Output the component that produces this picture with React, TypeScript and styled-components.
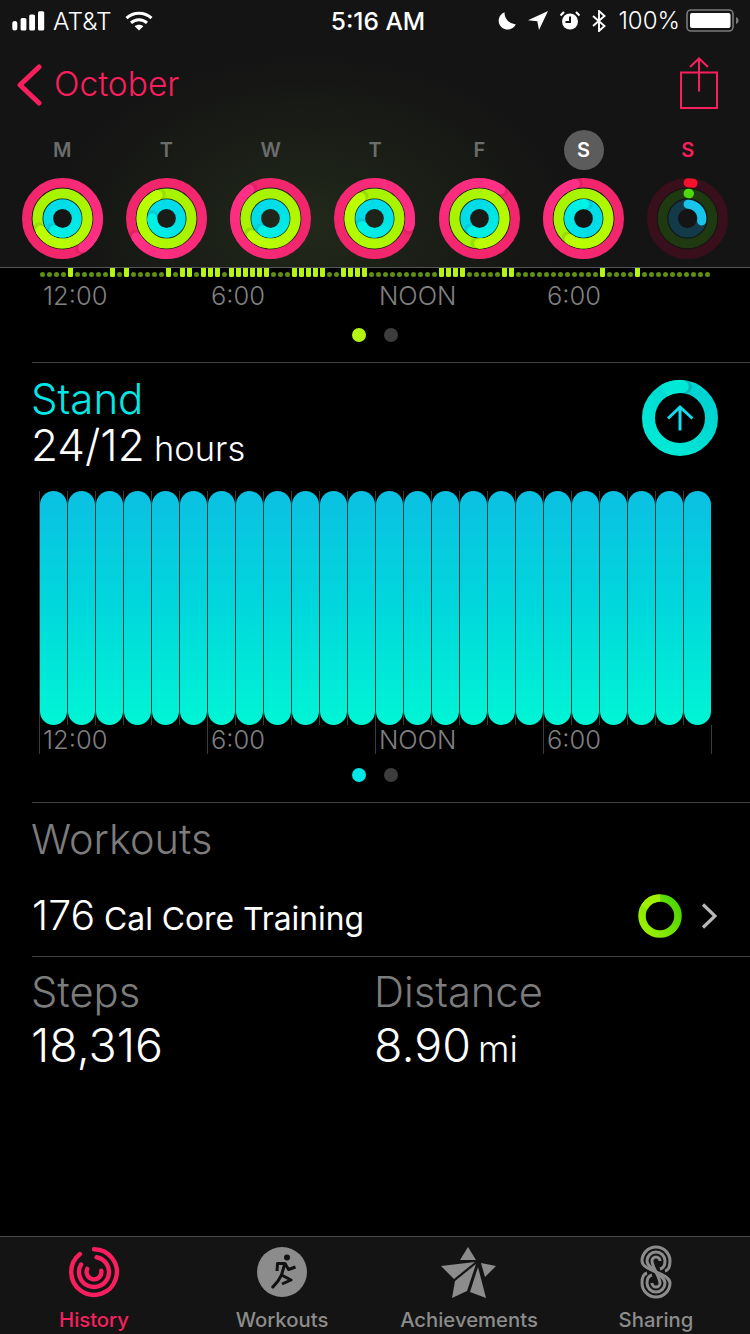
import React from "react";
import styled, { createGlobalStyle } from "styled-components";

const PINK = "#f91f5e";
const FONT = `Inter, "Liberation Sans", sans-serif`;

const GlobalStyle = createGlobalStyle`
  html, body {
    margin: 0;
    padding: 0;
    background: #000;
    font-family: ${FONT};
  }
`;

const polar = (cx: number, cy: number, r: number, deg: number) => {
  const a = ((deg - 90) * Math.PI) / 180;
  return [cx + r * Math.cos(a), cy + r * Math.sin(a)];
};

const arc = (cx: number, cy: number, r: number, from: number, to: number) => {
  const [x1, y1] = polar(cx, cy, r, from);
  const [x2, y2] = polar(cx, cy, r, to);
  const large = to - from > 180 ? 1 : 0;
  return `M${x1.toFixed(2)} ${y1.toFixed(2)}A${r} ${r} 0 ${large} 1 ${x2.toFixed(2)} ${y2.toFixed(2)}`;
};

type Track = { r: number; w: number; base: string; head: string; shade: string };

const TRACKS: Track[] = [
  { r: 35.7, w: 9.6, base: "#f2266c", head: "#ff3085", shade: "#a01040" },
  { r: 25, w: 10, base: "#a8f400", head: "#bcff00", shade: "#4f8a00" },
  { r: 14.3, w: 9.8, base: "#00dce8", head: "#00f2e4", shade: "#008c9c" },
];

const DoneRing: React.FC<{ heads: number[] }> = ({ heads }) => (
  <svg width="81" height="81" viewBox="0 0 81 81">
    {TRACKS.map((t, i) => {
      const head = heads[i];
      const [hx, hy] = polar(40.5, 40.5, t.r, head);
      const step = (t.w / 2 / t.r) * (180 / Math.PI) * 0.7;
      const [sx, sy] = polar(40.5, 40.5, t.r, head + step);
      return (
        <g key={i} fill="none">
          <circle cx="40.5" cy="40.5" r={t.r} stroke={t.base} strokeWidth={t.w} />
          {Array.from({ length: 14 }, (_, s) => (
            <path
              key={s}
              d={arc(40.5, 40.5, t.r, head - 210 + s * 15, head - 195 + s * 15 + 1)}
              stroke={t.head}
              strokeOpacity={(s + 1) / 14}
              strokeWidth={t.w}
            />
          ))}
          <circle cx={sx} cy={sy} r={t.w / 2} fill={t.shade} fillOpacity="0.2" />
          <path d={arc(40.5, 40.5, t.r, head - 8, head)} stroke={t.head} strokeWidth={t.w} />
          <circle cx={hx} cy={hy} r={t.w / 2} fill={t.head} />
        </g>
      );
    })}
  </svg>
);

const TodayRing = () => (
  <svg width="81" height="81" viewBox="0 0 81 81" fill="none">
    <circle cx="40.5" cy="40.5" r="35.7" stroke="#3a0f1c" strokeWidth="9.6" />
    <circle cx="40.5" cy="40.5" r="25" stroke="#1f3a10" strokeWidth="9.6" />
    <circle cx="40.5" cy="40.5" r="14.3" stroke="#123a48" strokeWidth="9.6" />
    <path d={arc(40.5, 40.5, 35.7, 1, 9)} stroke="#f5102c" strokeWidth="9" strokeLinecap="round" />
    <path d={arc(40.5, 40.5, 25, 2, 4)} stroke="#4fd80c" strokeWidth="9.6" strokeLinecap="round" />
    <path d={arc(40.5, 40.5, 14.3, 2, 100)} stroke="#18c4ea" strokeWidth="9" strokeLinecap="round" />
  </svg>
);

const WEEK = [
  { day: "M", heads: [145, 241, 215] },
  { day: "T", heads: [238, 339, 270] },
  { day: "W", heads: [324, 228, 213] },
  { day: "T", heads: [103, 326, 238] },
  { day: "F", heads: [36, 181, 211] },
  { day: "S", heads: [346, 214, 4], selected: true },
  { day: "S", today: true },
];

const STAND_HOURS = new Set([
  4, 10, 12, 18, 20, 21, 23, 24, 25, 27, 28, 29, 30, 31, 32, 36, 37, 38, 39, 40, 43, 44, 45, 46, 57, 58, 59, 60, 66, 67,
  80, 85,
]);

const AXIS = ["12:00", "6:00", "NOON", "6:00"];

const SignalIcon = () => (
  <svg width="33" height="20" viewBox="0 0 33 20" fill="#fff">
    <rect x="0.3" y="10" width="5" height="9.5" rx="2.5" />
    <rect x="8.6" y="7" width="5.8" height="12.5" rx="1.5" />
    <rect x="17.2" y="3.6" width="5.8" height="15.9" rx="1.5" />
    <rect x="26" y="0.3" width="6.2" height="19.2" rx="1.5" />
  </svg>
);

const WifiIcon = () => (
  <svg width="28" height="20" viewBox="0 0 28 20" fill="none" stroke="#fff" strokeWidth="3">
    <path d="M1.5 7.2C8.5 .6 19.5 .6 26.5 7.2" />
    <path d="M6 11.8C10.6 7.6 17.4 7.6 22 11.8" />
    <path d="M14 19.5L9.7 15.2C12 13.2 16 13.2 18.3 15.2Z" fill="#fff" stroke="none" />
  </svg>
);

const MoonIcon = () => (
  <svg width="19" height="18" viewBox="0 0 19 18" fill="#fff">
    <path d="M7.5 0.2A9 9 0 1 0 18.8 12.5A12 12 0 0 1 7.5 0.2Z" />
  </svg>
);

const LocationIcon = () => (
  <svg width="20" height="19" viewBox="0 0 20 19" fill="#fff">
    <path d="M20 0L0 9.3L9.3 10.3L11 19Z" />
  </svg>
);

const AlarmIcon = () => (
  <svg width="20" height="19" viewBox="0 0 20 19">
    <circle cx="10" cy="10.5" r="8" fill="#fff" />
    <path d="M10 5.5V11H5.5" fill="none" stroke="#141414" strokeWidth="2" />
    <path d="M0.5 4.5L4 1M19.5 4.5L16 1" stroke="#fff" strokeWidth="2.2" />
  </svg>
);

const BluetoothIcon = () => (
  <svg width="14" height="22" viewBox="0 0 14 22" fill="none" stroke="#fff" strokeWidth="1.9">
    <path d="M1 6L12.5 16L7 21V1L12.5 6L1 16" />
  </svg>
);

const BatteryIcon = () => (
  <svg width="53" height="23" viewBox="0 0 53 23">
    <rect x="1" y="1" width="46" height="21" rx="4" fill="none" stroke="#7a7a7a" strokeWidth="1.6" />
    <rect x="4" y="4" width="40.5" height="15" rx="2" fill="#fff" />
    <path d="M50 8C52 9 52.5 10 52.5 11.5S52 14 50 15Z" fill="#7a7a7a" />
  </svg>
);

const BackChevron = () => (
  <svg width="26" height="42" viewBox="0 0 26 42" fill="none" stroke={PINK} strokeWidth="5" strokeLinecap="round" strokeLinejoin="round">
    <path d="M23 3L4 21L23 39" />
  </svg>
);

const ShareIcon = () => (
  <svg width="40" height="54" viewBox="0 0 40 54" fill="none" stroke={PINK} strokeWidth="2">
    <path d="M2 15.5H38V51H2Z" />
    <path d="M20 34.5V1.5M11 10L20 1.5L29 10" />
  </svg>
);

const StandRing = () => (
  <svg width="76" height="76" viewBox="0 0 76 76" fill="none">
    <defs>
      <linearGradient id="standSweep" x1="1" y1="0" x2="0" y2="1">
        <stop offset="0" stopColor="#00cfd2" />
        <stop offset="1" stopColor="#00ecd6" />
      </linearGradient>
    </defs>
    <circle cx="38" cy="38" r="31.5" stroke="url(#standSweep)" strokeWidth="13" />
    <circle cx="43.5" cy="7" r="6.5" fill="#008f90" fillOpacity="0.4" />
    <path d={arc(38, 38, 31.5, 330, 364)} stroke="#00e8d6" strokeWidth="13" />
    <circle cx="40.2" cy="6.5" r="6.5" fill="#00e8d6" />
    <path d="M38 26.5V50.5M26 38.5L38 27L50.5 38.5" stroke="#12dcef" strokeWidth="3" />
  </svg>
);

const WorkoutRing = () => (
  <svg width="44" height="44" viewBox="0 0 44 44" fill="none">
    <defs>
      <linearGradient id="workoutSweep" x1="1" y1="0" x2="0" y2="0.6">
        <stop offset="0" stopColor="#48d400" />
        <stop offset="1" stopColor="#96ee00" />
      </linearGradient>
    </defs>
    <circle cx="22" cy="22" r="18" stroke="url(#workoutSweep)" strokeWidth="7.5" />
    <path d={arc(22, 22, 18, 300, 360)} stroke="#a0f000" strokeWidth="7.5" />
  </svg>
);

const RowChevron = () => (
  <svg width="16" height="26" viewBox="0 0 16 26" fill="none" stroke="#b8b8b8" strokeWidth="3.2">
    <path d="M2 1.5L14 13L2 24.5" />
  </svg>
);

const HistoryIcon = () => (
  <svg width="52" height="52" viewBox="0 0 52 52" fill="none" stroke={PINK} strokeWidth="4.4" strokeLinecap="round">
    <path d={arc(26, 26, 22.8, 0, 322)} />
    <path d={arc(26, 26, 15, 10, 300)} />
    <path d={arc(26, 26, 7.4, 80, 295)} />
  </svg>
);

const WorkoutsIcon = () => (
  <svg width="50" height="50" viewBox="0 0 50 50">
    <circle cx="25" cy="25" r="25" fill="#8c8c8c" />
    <circle cx="30" cy="10.5" r="3" fill="#111" />
    <g fill="none" stroke="#111" strokeWidth="3" strokeLinejoin="round">
      <path d="M28 16L24.5 28L34 33L25 37" />
      <path d="M24.5 28L21 34L15 41" />
      <path d="M20 24L20.5 16.5H28L31.5 22.5L38.5 20" />
    </g>
  </svg>
);

const AchievementsIcon = () => (
  <svg width="56" height="56" viewBox="2 0 56 56" fill="#8c8c8c">
    <path d="M29 3L37 16H21Z" />
    <path d="M2 22L36 18L15 35Z" />
    <path d="M37 20L28 47L13 54L16 37Z" />
    <path d="M39 23L47 54L31 48Z" />
    <path d="M42 19L57 22L46 33Z" />
  </svg>
);

const SharingIcon = () => (
  <svg width="34" height="54" viewBox="0 0 34 54" fill="none" stroke="#8c8c8c" strokeWidth="3">
    <path d="M26 26C30 25 31 22 31 16A14 14 0 0 0 3 16C3 26 31 28 31 38A14 14 0 0 1 3 38C3 32 4 29 8 28" />
    <path d="M21 24C25 23 26 20 26 16A9 9 0 0 0 8 16C8 24 26 30 26 38A9 9 0 0 1 8 38C8 34 9 31 13 30" />
    <path d="M21 16A4 4 0 0 0 13 16C13 22 21 32 21 38A4 4 0 0 1 13 38" />
  </svg>
);

const TABS = [
  { label: "History", icon: <HistoryIcon />, active: true },
  { label: "Workouts", icon: <WorkoutsIcon /> },
  { label: "Achievements", icon: <AchievementsIcon /> },
  { label: "Sharing", icon: <SharingIcon /> },
];

export default function App() {
  return (
    <Screen>
      <GlobalStyle />
      <Header>
        <StatusBar>
          <StatusLeft>
            <SignalIcon />
            <Carrier>AT&amp;T</Carrier>
            <WifiIcon />
          </StatusLeft>
          <Clock>5:16 AM</Clock>
          <StatusRight>
            <MoonIcon />
            <LocationIcon />
            <AlarmIcon />
            <BluetoothIcon />
            <Percent>100%</Percent>
            <BatteryIcon />
          </StatusRight>
        </StatusBar>
        <NavBar>
          <BackLink>
            <BackChevron />
            <span>October</span>
          </BackLink>
          <ShareIcon />
        </NavBar>
        <Week>
          {WEEK.map((d, i) => (
            <DayColumn key={i}>
              <DayLabel $selected={d.selected} $today={d.today}>
                {d.day}
              </DayLabel>
              {d.heads ? <DoneRing heads={d.heads} /> : <TodayRing />}
            </DayColumn>
          ))}
        </Week>
      </Header>

      <Content>
        <Strip>
          {Array.from({ length: 96 }, (_, i) => (
            <StripCell key={i}>{STAND_HOURS.has(i) ? <StripBar /> : <StripDot />}</StripCell>
          ))}
        </Strip>
        <Axis>
          {AXIS.map((label, i) => (
            <AxisCell key={i}>{label}</AxisCell>
          ))}
        </Axis>
        <Pager $top={13}>
          <PagerDot $color="#b4f514" />
          <PagerDot $color="#3d3d3d" />
        </Pager>
        <Divider $top={20} />

        <StandHead>
          <div>
            <StandTitle>Stand</StandTitle>
            <StandValue>
              24/12 <small>hours</small>
            </StandValue>
          </div>
          <StandRing />
        </StandHead>
        <Bars>
          {Array.from({ length: 24 }, (_, i) => (
            <BarSlot key={i}>
              <Bar />
            </BarSlot>
          ))}
        </Bars>
        <Axis $ticks>
          {AXIS.map((label, i) => (
            <AxisCell key={i} $ticks>
              {label}
            </AxisCell>
          ))}
        </Axis>
        <Pager $top={14}>
          <PagerDot $color="#00e6e6" />
          <PagerDot $color="#3d3d3d" />
        </Pager>
        <Divider $top={20} />

        <SectionTitle>Workouts</SectionTitle>
        <WorkoutRow>
          <WorkoutName>
            <b>176</b> Cal Core Training
          </WorkoutName>
          <WorkoutSide>
            <WorkoutRing />
            <RowChevron />
          </WorkoutSide>
        </WorkoutRow>
        <Divider />
        <Stats>
          <div>
            <StatLabel>Steps</StatLabel>
            <StatValue>18,316</StatValue>
          </div>
          <div>
            <StatLabel>Distance</StatLabel>
            <StatValue>
              8.90 <small>mi</small>
            </StatValue>
          </div>
        </Stats>
      </Content>

      <TabBar>
        {TABS.map((tab) => (
          <Tab key={tab.label} $active={tab.active}>
            <TabIcon>{tab.icon}</TabIcon>
            {tab.label}
          </Tab>
        ))}
      </TabBar>
    </Screen>
  );
}

const Screen = styled.div`
  width: 750px;
  height: 1334px;
  display: flex;
  flex-direction: column;
  overflow: hidden;
  background: #000;
  color: #fff;
`;

const Header = styled.header`
  height: 267px;
  flex: none;
  border-bottom: 1px solid #565656;
  background: radial-gradient(ellipse 260px 170px at 310px 225px, #22291a 0%, #1b1f17 45%, #141414 100%);
`;

const StatusBar = styled.div`
  height: 41px;
  display: flex;
  align-items: center;
  justify-content: space-between;
  padding: 0 11px 0 12px;
  position: relative;
`;

const StatusLeft = styled.div`
  display: flex;
  align-items: center;
  gap: 8px;
`;

const Carrier = styled.span`
  font-size: 24.5px;
  font-weight: 300;
  margin-right: 5px;
`;

const Clock = styled.span`
  position: absolute;
  left: 0;
  right: 0;
  text-align: center;
  font-size: 24.5px;
  font-weight: 500;
  pointer-events: none;
  padding-left: 6px;
`;

const StatusRight = styled.div`
  display: flex;
  align-items: center;
  gap: 12px;
`;

const Percent = styled.span`
  font-size: 24px;
  font-weight: 300;
  margin-right: -6px;
`;

const NavBar = styled.div`
  height: 85px;
  margin-bottom: 4px;
  display: flex;
  align-items: center;
  justify-content: space-between;
  padding: 0 31px 0 16px;
`;

const BackLink = styled.div`
  display: flex;
  align-items: center;
  gap: 12px;
  color: ${PINK};
  font-size: 33.5px;
  font-weight: 300;
  svg {
    margin-top: 2px;
  }
`;

const Week = styled.div`
  display: grid;
  grid-template-columns: repeat(7, 1fr);
  padding: 0 10px;
`;

const DayColumn = styled.div`
  display: flex;
  flex-direction: column;
  align-items: center;
  gap: 8px;
`;

const DayLabel = styled.div<{ $selected?: boolean; $today?: boolean }>`
  width: 40px;
  height: 40px;
  border-radius: 50%;
  display: flex;
  align-items: center;
  justify-content: center;
  font-size: 20px;
  font-weight: 600;
  color: ${({ $selected, $today }) => ($selected ? "#fff" : $today ? PINK : "#6c6c6c")};
  background: ${({ $selected }) => ($selected ? "#5c5c5c" : "transparent")};
`;

const Content = styled.main`
  flex: 1;
  min-height: 0;
`;

const Strip = styled.div`
  height: 9px;
  display: flex;
  padding-left: 39px;
`;

const StripCell = styled.div`
  width: 7px;
  display: flex;
  align-items: flex-end;
  justify-content: center;
`;

const StripBar = styled.div`
  width: 5px;
  height: 9px;
  border-radius: 0 0 1.5px 1.5px;
  background: #b4f514;
`;

const StripDot = styled.div`
  width: 5px;
  height: 5px;
  border-radius: 50%;
  background: #5f900e;
`;

const Axis = styled.div<{ $ticks?: boolean }>`
  display: flex;
  margin-left: 39px;
  width: 673px;
  height: ${({ $ticks }) => ($ticks ? "29px" : "38px")};
  line-height: ${({ $ticks }) => ($ticks ? "29px" : "38px")};
  ${({ $ticks }) => $ticks && "border-right: 1px solid #3a3a3a; box-sizing: border-box;"}
`;

const AxisCell = styled.div<{ $ticks?: boolean }>`
  width: 168px;
  box-sizing: border-box;
  padding-left: 3px;
  font-size: 25.5px;
  font-weight: 300;
  color: #808080;
  border-left: 1px solid ${({ $ticks }) => ($ticks ? "#3a3a3a" : "transparent")};
`;

const Pager = styled.div<{ $top: number }>`
  margin-top: ${({ $top }) => $top}px;
  display: flex;
  justify-content: center;
  gap: 18px;
`;

const PagerDot = styled.div<{ $color: string }>`
  width: 14px;
  height: 14px;
  border-radius: 50%;
  background: ${({ $color }) => $color};
`;

const Divider = styled.div<{ $top?: number }>`
  height: 1px;
  margin-left: 32px;
  margin-top: ${({ $top = 0 }) => $top}px;
  background: #3f3f3f;
`;

const StandHead = styled.div`
  display: flex;
  align-items: flex-start;
  justify-content: space-between;
  padding: 15px 32px 0 31px;
  svg {
    margin-top: 2px;
  }
`;

const StandTitle = styled.div`
  font-size: 42px;
  font-weight: 300;
  line-height: 42px;
  color: #00e8e8;
`;

const StandValue = styled.div`
  height: 50px;
  font-size: 44px;
  font-weight: 300;
  line-height: 50px;
  word-spacing: -3px;
  small {
    font-size: 34.5px;
    line-height: 1;
  }
`;

const Bars = styled.div`
  display: flex;
  margin: 21px 0 0 39px;
  width: 672px;
  height: 234px;
  box-sizing: border-box;
`;

const BarSlot = styled.div`
  width: 28px;
  box-sizing: border-box;
  border-left: 1px solid #3a3a3a;
`;

const Bar = styled.div`
  height: 100%;
  border-radius: 13.5px;
  background: linear-gradient(180deg, #0bc0e2 0%, #00d8dc 50%, #00f5d4 100%);
`;

const SectionTitle = styled.div`
  padding: 11px 0 0 31px;
  font-size: 41.5px;
  font-weight: 300;
  line-height: 50px;
  color: #7c7c7c;
`;

const WorkoutRow = styled.div`
  height: 92px;
  box-sizing: border-box;
  padding: 20px 33px 0 32px;
  display: flex;
  align-items: flex-start;
  justify-content: space-between;
`;

const WorkoutName = styled.div`
  line-height: 69px;
  font-size: 31.8px;
  font-weight: 400;
  b {
    font-size: 41px;
    font-weight: 300;
    line-height: 1;
  }
`;

const WorkoutSide = styled.div`
  display: flex;
  align-items: center;
  gap: 19px;
  height: 63px;
`;

const Stats = styled.div`
  display: grid;
  grid-template-columns: 343px 1fr;
  padding: 12px 0 0 31px;
`;

const StatLabel = styled.div`
  font-size: 41.7px;
  font-weight: 300;
  line-height: 46px;
  color: #7c7c7c;
`;

const StatValue = styled.div`
  margin-top: 2px;
  font-size: 46.5px;
  font-weight: 300;
  line-height: 56px;
  word-spacing: -6px;
  small {
    font-size: 36px;
    line-height: 1;
  }
`;

const TabBar = styled.nav`
  height: 97px;
  flex: none;
  border-top: 1px solid #4a4a4a;
  background: #141414;
  display: grid;
  grid-template-columns: 188px 188px 186px 188px;
`;

const Tab = styled.div<{ $active?: boolean }>`
  display: flex;
  flex-direction: column;
  align-items: center;
  font-size: 20.3px;
  font-weight: 500;
  color: ${({ $active }) => ($active ? PINK : "#8c8c8c")};
`;

const TabIcon = styled.div`
  height: 70px;
  display: flex;
  align-items: center;
`;
